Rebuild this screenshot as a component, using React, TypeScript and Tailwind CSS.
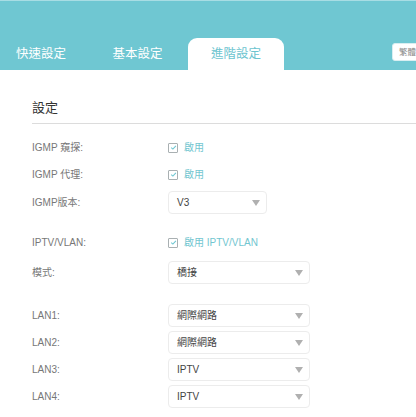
import React from "react";

const font = { fontFamily: '"Liberation Sans", "Noto Sans CJK TC", sans-serif' };

function Check({ label }: { label: string }) {
  return (
    <div className="flex items-center gap-[6px]">
      <span className="flex h-[10px] w-[10px] items-center justify-center rounded-[1px] border border-[#a9b0b2] bg-white">
        <svg width="7" height="7" viewBox="0 0 7 7">
          <path d="M1.2 3.6 L2.9 5.1 L5.9 1.8" fill="none" stroke="#6fc7d2" strokeWidth="1.1" />
        </svg>
      </span>
      <span className="text-[10px] leading-none text-[#72c6d0]">{label}</span>
    </div>
  );
}

function Select({ value, w }: { value: string; w: string }) {
  return (
    <div className={`flex h-[23px] items-center justify-between rounded-[4px] border border-[#ececec] bg-white pl-[8px] pr-[6px] ${w}`}>
      <span className="text-[10px] leading-none text-[#444]">{value}</span>
      <svg width="8" height="6" viewBox="0 0 8 6">
        <path d="M0 0 L8 0 L4 6 Z" fill="#b0b0b0" />
      </svg>
    </div>
  );
}

function Row({ label, children, extra = "" }: { label: string; children: React.ReactNode; extra?: string }) {
  return (
    <div className={`flex h-[27px] items-center ${extra}`}>
      <div className="w-[136px] text-[10px] leading-none text-[#777]">{label}</div>
      {children}
    </div>
  );
}

export default function App() {
  return (
    <div className="h-[417px] w-[416px] overflow-hidden bg-white" style={font}>
      <div className="flex h-[70px] items-end overflow-hidden border-t border-[#a8dde4] bg-[#6fc7d2]">
        <div className="flex h-[32px] w-[82px] items-center justify-center text-[12.5px] text-white">快速設定</div>
        <div className="ml-[7px] flex h-[32px] w-[97px] items-center justify-center text-[12.5px] text-white">基本設定</div>
        <div className="ml-[2px] flex h-[32px] w-[96px] items-center justify-center rounded-t-[9px] bg-white text-[12.5px] text-[#6cc4cf]">
          進階設定
        </div>
        <div className="mb-[9px] ml-auto mr-[-26px] flex h-[18px] w-[50px] items-center rounded-[3px] border border-[#d9eef1] bg-white pl-[6px] text-[8.5px] text-[#8a8a8a]">
          繁體中文
        </div>
      </div>
      <div className="pl-[32px]">
        <div className="mt-[28px] h-[26px] border-b border-[#dcdcdc] text-[13px] leading-[20px] text-[#333]">設定</div>
        <div className="mt-[10px]">
          <Row label="IGMP 窺探:">
            <Check label="啟用" />
          </Row>
          <Row label="IGMP 代理:">
            <Check label="啟用" />
          </Row>
          <Row label="IGMP版本:" extra="mt-[1px]">
            <Select value="V3" w="w-[99px]" />
          </Row>
          <Row label="IPTV/VLAN:" extra="mt-[13px]">
            <Check label="啟用 IPTV/VLAN" />
          </Row>
          <Row label="模式:" extra="mt-[3px]">
            <Select value="橋接" w="w-[142px]" />
          </Row>
          <Row label="LAN1:" extra="mt-[16px]">
            <Select value="網際網路" w="w-[142px]" />
          </Row>
          <Row label="LAN2:">
            <Select value="網際網路" w="w-[142px]" />
          </Row>
          <Row label="LAN3:">
            <Select value="IPTV" w="w-[142px]" />
          </Row>
          <Row label="LAN4:">
            <Select value="IPTV" w="w-[142px]" />
          </Row>
        </div>
      </div>
    </div>
  );
}
